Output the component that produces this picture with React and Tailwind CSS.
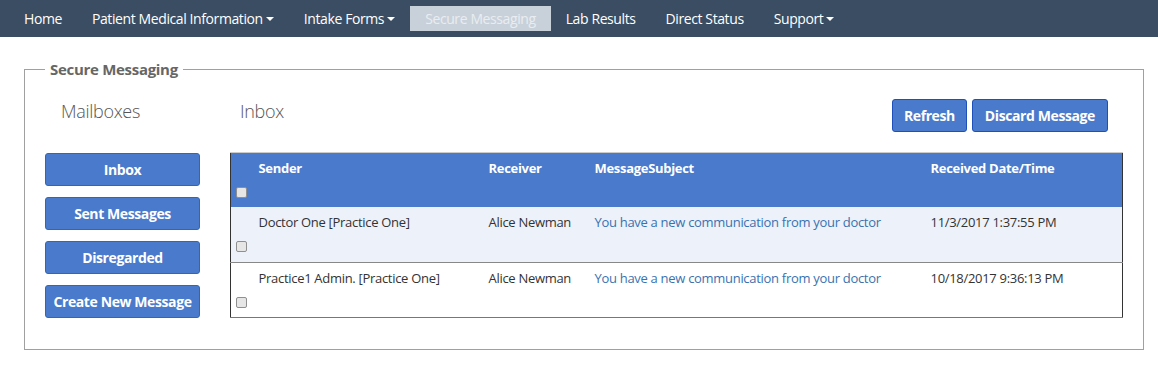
import { useState } from 'react';

const navItems = [
  { label: 'Home' },
  { label: 'Patient Medical Information', caret: true },
  { label: 'Intake Forms', caret: true },
  { label: 'Secure Messaging', active: true },
  { label: 'Lab Results' },
  { label: 'Direct Status' },
  { label: 'Support', caret: true },
];

const messages = [
  {
    sender: 'Doctor One [Practice One]',
    receiver: 'Alice Newman',
    subject: 'You have a new communication from your doctor',
    date: '11/3/2017 1:37:55 PM',
  },
  {
    sender: 'Practice1 Admin. [Practice One]',
    receiver: 'Alice Newman',
    subject: 'You have a new communication from your doctor',
    date: '10/18/2017 9:36:13 PM',
  },
];

function Caret() {
  return <span className="inline-block ml-[3px] align-middle border-x-[4px] border-x-transparent border-t-[4px] border-t-current" />;
}

function Checkbox() {
  return <span className="block w-[11px] h-[11px] border border-[#8f8f8f] rounded-[2px] bg-[#e6e6e6]" />;
}

function App() {
  const [box, setBox] = useState('Inbox');

  return (
    <div className="w-[1158px] h-[368px] bg-white font-['Open_Sans',sans-serif] text-[#333]">
      <nav className="h-[37px] bg-[#3a4d62] flex items-center pl-[9px]">
        {navItems.map((item) => (
          <a
            key={item.label}
            className={
              item.active
                ? 'h-[25px] flex items-center px-[15px] bg-[#c8d1da] text-[#e9edf1] text-[14px] tracking-[-0.4px]'
                : 'h-[25px] flex items-center px-[15px] text-white text-[14px] tracking-[-0.4px]'
            }
          >
            {item.label}
            {item.caret && <Caret />}
          </a>
        ))}
      </nav>

      <div className="px-[24px] pt-[21px]">
        <fieldset className="border border-[#a0a0a0] h-[292px] pl-[20px] pr-[20px]">
          <legend className="px-[5px] text-[15px] font-bold text-[#666] tracking-[-0.3px]">Secure Messaging</legend>
          <div className="flex gap-[30px] mt-[17px]">
            <div className="w-[155px]">
              <h2 className="text-[18px] text-[#555] font-light pl-[16px] h-[33px] tracking-[-0.3px]">Mailboxes</h2>
              <div className="flex flex-col gap-[11px] mt-[22px]">
                {['Inbox', 'Sent Messages', 'Disregarded', 'Create New Message'].map((b) => (
                  <button
                    key={b}
                    onClick={() => setBox(b)}
                    className="h-[33px] w-[155px] bg-[#4a7acb] border border-[#3466b0] rounded-[3px] text-white text-[14px] font-bold tracking-[-0.4px]"
                  >
                    {b}
                  </button>
                ))}
              </div>
            </div>

            <div className="flex-1">
              <div className="flex items-start justify-between h-[54px] pr-[15px]">
                <h2 className="text-[18px] text-[#555] font-light pl-[10px] tracking-[-0.3px]">{box === 'Inbox' ? 'Inbox' : box}</h2>
                <div className="flex gap-[5px] mt-[1px]">
                  <button className="h-[33px] px-[11px] bg-[#4a7acb] border border-[#1f4fb8] rounded-[3px] text-white text-[14px] font-bold tracking-[-0.4px]">Refresh</button>
                  <button className="h-[33px] px-[12px] bg-[#4a7acb] border border-[#1f4fb8] rounded-[3px] text-white text-[14px] font-bold tracking-[-0.4px]">Discard Message</button>
                </div>
              </div>

              <table className="w-[893px] border-collapse border-x border-b border-x-[#333] border-b-[#777] text-[13px] tracking-[-0.3px]">
                <thead>
                  <tr className="bg-[#4a7acb] text-white h-[55px] align-top border-t border-[#ccc]">
                    <th className="w-[28px] pl-[5px] pt-[34px]"><Checkbox /></th>
                    <th className="text-left font-bold w-[230px] pt-[6px]">Sender</th>
                    <th className="text-left font-bold w-[106px] pt-[6px]">Receiver</th>
                    <th className="text-left font-bold w-[336px] pt-[6px]">MessageSubject</th>
                    <th className="text-left font-bold pt-[6px]">Received Date/Time</th>
                  </tr>
                </thead>
                <tbody>
                  {messages.map((m, i) => (
                    <tr
                      key={i}
                      className={
                        i === 0
                          ? 'h-[55px] align-top bg-[#edf1f9] border-b border-[#888]'
                          : 'h-[55px] align-top bg-white'
                      }
                    >
                      <td className="pl-[5px] pt-[34px]"><Checkbox /></td>
                      <td className="pt-[6px] text-[#333]">{m.sender}</td>
                      <td className="pt-[6px] text-[#333]">{m.receiver}</td>
                      <td className="pt-[6px] text-[#3a72b0]">{m.subject}</td>
                      <td className="pt-[6px] text-[#333]">{m.date}</td>
                    </tr>
                  ))}
                </tbody>
              </table>
            </div>
          </div>
        </fieldset>
      </div>
    </div>
  );
}

export default App;
